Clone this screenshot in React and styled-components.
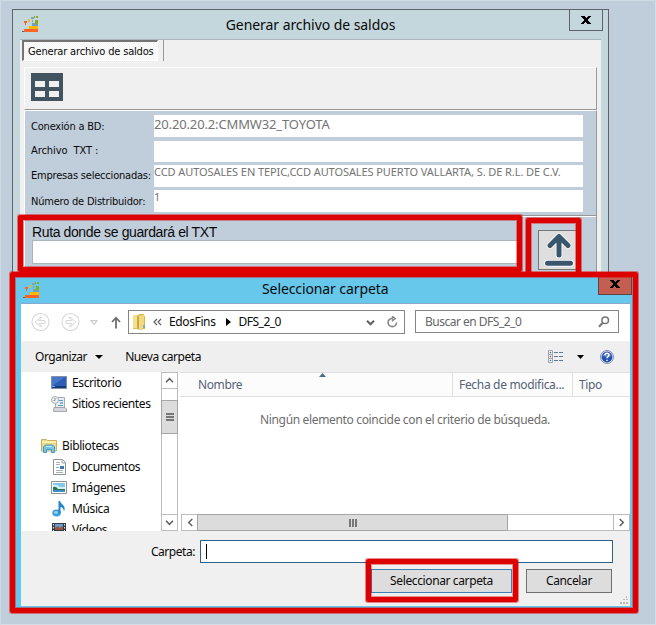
import React from 'react';
import styled, { createGlobalStyle } from 'styled-components';

const Global = createGlobalStyle`
  * { box-sizing: border-box; }
  body { margin: 0; overflow: hidden; }
  svg { display: block; flex: none; }
`;

const ui = '"Noto Sans", "Open Sans", sans-serif';
const tahoma = '"DejaVu Sans Condensed", "DejaVu Sans", sans-serif';

const Desktop = styled.div`
  position: relative;
  width: 656px;
  height: 625px;
  padding: 9px 0 0 12px;
  overflow: hidden;
  background: #c0cddb;
  box-shadow: inset 1px 1px 0 #cfdae4, inset -1px -1px 0 #d2dde7;
`;

const Label = styled.span`
  display: block;
  white-space: pre;
  font-family: ${(p) => p.$font || ui};
  font-size: ${(p) => p.$size || 12}px;
  line-height: 16px;
  letter-spacing: ${(p) => p.$ls ?? -0.38}px;
  color: ${(p) => p.$color || '#0a0a0a'};
`;

/* ---------- Main window ---------- */
const MainWindow = styled.section`
  display: flex;
  flex-direction: column;
  width: 597px;
  height: 520px;
  padding: 0 7px;
  background: #c3d7dc;
  border: 1px solid #5f626c;
`;

const TitleBar = styled.header`
  display: grid;
  grid-template-columns: 60px 1fr 60px;
  height: 29px;
  flex: none;
`;

const TitleIcon = styled.div`
  padding: 5px 0 0 2px;
`;

const WindowTitle = styled.div`
  display: flex;
  justify-content: center;
  padding-top: 7px;
`;

const CloseButton = styled.button`
  justify-self: end;
  width: 34px;
  height: 22px;
  margin: -1px -2px 0 0;
  padding: 0;
  display: flex;
  align-items: center;
  justify-content: center;
  background: #c3d7dc;
  border: 1px solid #5f626c;
`;

const MainClient = styled.div`
  display: flex;
  flex-direction: column;
  flex: 1;
  background: #f0f0f0;
  border-top: 1px solid #aab7bd;
`;

const TabStrip = styled.nav`
  display: flex;
  height: 22px;
  gap: 5px;
  padding-left: 2px;
  margin-bottom: 5px;
`;

const Tab = styled.div`
  width: 136px;
  height: 21px;
  padding: 2px 0 0 4px;
  border: 1px solid #fff;
  border-top: 2px solid #747474;
  border-left: 2px solid #747474;
  background: repeating-conic-gradient(#fff 0 25%, #f3f3f3 0 50%) 0 0 / 2px 2px;
`;

const TabDivider = styled.div`
  width: 1px;
  height: 21px;
  background: #979797;
`;

const Toolbar = styled.div`
  height: 43px;
  margin: 0 4px 0 4px;
  padding: 5px 0 0 6px;
  border: 1px solid #fff;
  border-right-color: #9a9a9a;
  border-bottom-color: #979797;
`;

const FormPanel = styled.div`
  flex: 1;
  margin: 0 4px 0 4px;
  background: #c0cddb;
  border: solid #fff;
  border-width: 1px 0 0 1px;
  border-right: 1px solid #999;
`;

const Fields = styled.div`
  display: grid;
  grid-template-columns: 123px 429px;
  grid-template-rows: 26px 24px 25px 22px;
  height: 105px;
  padding: 4px 0 0 6px;
  border-bottom: 1px solid #979797;
`;

const FieldLabel = styled.label`
  padding-top: ${(p) => p.$top}px;
`;

const FieldValue = styled.div`
  height: ${(p) => p.$height}px;
  background: #fff;

  ${Label} {
    margin-top: ${(p) => p.$top || 0}px;
  }
`;

const RouteSection = styled.div`
  display: flex;
  border-top: 1px solid #fff;
`;

const RouteGroup = styled.div`
  width: 494px;
  padding: 7px 0 0 7px;
`;

const RouteInput = styled.div`
  height: 24px;
  background: #fff;
  border: 1px solid #aeb3b9;
`;

const UploadButton = styled.button`
  display: flex;
  align-items: flex-start;
  width: 40px;
  height: 40px;
  margin: 13px 0 0 19px;
  padding: 2px 0 0 5px;
  border: 1px solid #777;
  background: #dedede;
`;

/* ---------- Dialog ---------- */
const Dialog = styled.section`
  position: absolute;
  left: 14px;
  top: 276px;
  width: 619px;
  height: 332px;
  padding: 0 3px 2px 7px;
  background: #67c8ec;
`;

const DialogTitleBar = styled.header`
  display: grid;
  grid-template-columns: 60px 1fr 34px;
  height: 28px;
  border-bottom: 1px solid #86a9cd;
`;

const DialogTitle = styled.div`
  display: flex;
  padding: 5px 0 0 181px;
`;

const DialogClose = styled.button`
  width: 34px;
  height: 19px;
  margin-left: 2px;
  padding: 0 0 2px;
  display: flex;
  align-items: center;
  justify-content: center;
  background: #c35e50;
  border: 1px solid #5d4548;
  border-top: 0;
`;

const NavRow = styled.div`
  display: flex;
  height: 37px;
  padding: 6px 11px 0 10px;
  background: #fff;
`;

const NavButtons = styled.div`
  display: flex;
  align-items: center;
  width: 97px;
  height: 24px;
`;

const AddressBar = styled.div`
  display: flex;
  align-items: center;
  width: 277px;
  height: 24px;
  padding: 0 6px 0 3px;
  border: 1px solid #858585;
`;

const Crumb = styled.div`
  margin-left: ${(p) => p.$gap}px;
`;

const AddressActions = styled.div`
  display: flex;
  align-items: center;
  gap: 12px;
  margin-left: auto;
`;

const SearchBox = styled.div`
  display: flex;
  align-items: center;
  justify-content: space-between;
  width: 204px;
  height: 23px;
  margin-left: 10px;
  padding: 0 8px 0 9px;
  border: 1px solid #858585;
`;

const CommandBar = styled.div`
  display: flex;
  align-items: center;
  height: 31px;
  padding: 0 16px 0 14px;
  background: #efefef;
`;

const CommandArrow = styled.div`
  margin: 0 22px 0 8px;
`;

const ViewActions = styled.div`
  display: flex;
  align-items: center;
  margin-left: auto;
`;

const ViewArrow = styled.div`
  margin: 0 16px 0 13px;
`;

const Browser = styled.div`
  display: flex;
  height: 159px;
  background: #fff;
`;

const Tree = styled.ul`
  width: 140px;
  margin: 0;
  padding: 0;
  overflow: hidden;
  list-style: none;
`;

const TreeItem = styled.li`
  display: flex;
  align-items: center;
  gap: 5px;
  height: 21px;
  padding-left: ${(p) => (p.$root ? 20 : 30)}px;
  margin-top: ${(p) => (p.$root ? 21 : 0)}px;
`;

const TreeIcon = styled.div`
  display: flex;
  justify-content: center;
  width: 16px;
`;

const VerticalScroll = styled.div`
  width: 17px;
  border: 1px solid #bcbcbc;
  display: flex;
  flex-direction: column;
`;

const ScrollButton = styled.div`
  display: flex;
  align-items: center;
  justify-content: center;
  width: ${(p) => (p.$side ? 16 : 15)}px;
  height: ${(p) => (p.$side ? 15 : 16)}px;
  flex: none;
  border: 0 solid #bcbcbc;
  border-top-width: ${(p) => (!p.$side && p.$end ? 1 : 0)}px;
  border-bottom-width: ${(p) => (!p.$side && !p.$end ? 1 : 0)}px;
  border-left-width: ${(p) => (p.$side && p.$end ? 1 : 0)}px;
`;

const VerticalThumb = styled.div`
  display: flex;
  align-items: center;
  justify-content: center;
  height: 34px;
  margin: 11px -1px auto;
  background: #dcdcdc;
  border: 1px solid #a5a5a5;
`;

const FileList = styled.div`
  display: flex;
  flex-direction: column;
  width: 450px;
  margin-left: auto;
`;

const ListHeader = styled.div`
  display: grid;
  grid-template-columns: 273px 120px 1fr;
  height: 25px;
  background: #fcfcfc;
  border: solid #dfdfdf;
  border-width: 1px 0;
`;

const HeaderCell = styled.div`
  position: relative;
  padding: 4px 0 0 ${(p) => p.$pad}px;
  border-right: ${(p) => (p.$last ? 0 : 1)}px solid #dfdfdf;
`;

const SortMark = styled.div`
  position: absolute;
  left: 139px;
  top: 0;
`;

const EmptyMessage = styled.div`
  display: flex;
  flex: 1;
  padding: 15px 0 0 80px;
`;

const HorizontalScroll = styled.div`
  display: flex;
  height: 17px;
  margin-left: 1px;
  border: 1px solid #bcbcbc;
  justify-content: space-between;
`;

const HorizontalThumb = styled.div`
  display: flex;
  align-items: center;
  justify-content: center;
  width: 311px;
  margin: -1px auto -1px -1px;
  background: #dcdcdc;
  border: 1px solid #a5a5a5;
`;

const Footer = styled.footer`
  height: 75px;
  padding: 9px 17px 0 0;
  background: #f0f0f0;
  position: relative;
`;

const FolderRow = styled.div`
  display: flex;
  align-items: center;
  justify-content: flex-end;
  gap: 5px;
`;

const FolderInput = styled.div`
  width: 413px;
  height: 23px;
  padding: 3px 5px;
  background: #fff;
  border: 1px solid #2c628b;
`;

const Caret = styled.div`
  width: 1px;
  height: 15px;
  background: #000;
`;

const Buttons = styled.div`
  display: flex;
  justify-content: flex-end;
  gap: 14px;
  padding: 6px 1px 0 0;
`;

const DialogButton = styled.button`
  display: flex;
  align-items: center;
  justify-content: center;
  width: ${(p) => p.$width}px;
  height: 24px;
  padding: 0;
  background: #dddddd;
  border: 1px solid ${(p) => (p.$primary ? '#3c7fb1' : '#707070')};
`;

const Grip = styled.div`
  position: absolute;
  right: 2px;
  bottom: 2px;
`;

/* Red frames drawn over the windows */
const Highlight = styled.div`
  position: absolute;
  left: ${(p) => p.$x}px;
  top: ${(p) => p.$y}px;
  width: ${(p) => p.$w}px;
  height: ${(p) => p.$h}px;
  border: 5px solid #dc0000;
  border-radius: 2px;
  box-shadow: 0 0 0 1px rgba(220, 0, 0, 0.45), inset 0 0 0 1px rgba(220, 0, 0, 0.4);
  pointer-events: none;
`;

/* ---------- Drawings ---------- */
const Logo = () => (
  <svg width="18" height="18" viewBox="0 0 18 18" shapeRendering="crispEdges">
    <path d="M0 16h2v-2h14v3H0z" fill="#ff6426" />
    <path d="M0 16h2v1H0z" fill="#686068" />
    <path d="M7 11h9v3H7z" fill="#fdb800" />
    <path d="M10 8h6v3h-6z" fill="#75a0b5" />
    <path d="M13 5h3v4h-3zM12 1h1v2h-1zM14 1h2v2h-2z" fill="#88ac20" />
    <path d="M2 6h3v2H4v2H3V8H2zM7 5h1v1H7z" fill="#f16434" />
    <path d="M6 4h2v3H6z" fill="#edba25" />
    <path d="M9 2h3v2H9zM10 5h1v2h-1z" fill="#7da6ae" />
  </svg>
);

const CloseMark = () => (
  <svg width="10" height="8" viewBox="0 0 10 8" fill="#000" shapeRendering="crispEdges">
    <path d="M0 0h4v1h1v1h1V1h1V0h3v1H9v1H8v1H7v2h1v1h1v1h1v1H6V7H5V6H4v1H3v1H0V7h1V6h1V5h1V3H2V2H1V1H0z" />
  </svg>
);

const TableIcon = () => (
  <svg width="32" height="28" viewBox="0 0 32 28">
    <path d="M0 0h32v28H0z" fill="#41545f" />
    <path d="M4 8h10v6H4zM18 8h10v6H18zM4 18h10v6H4zM18 18h10v6H18z" fill="#f0f0f0" />
  </svg>
);

const UploadIcon = () => (
  <svg width="30" height="34" viewBox="0 0 30 34" fill="none" strokeLinecap="round" strokeLinejoin="round">
    <path d="M15 22V4M6 12.5L15 3.5l9 9M3.5 30.3h23" stroke="#fff" strokeWidth="6.6" />
    <path d="M15 22V4M6 12.5L15 3.5l9 9M3.5 30.3h23" stroke="#39566c" strokeWidth="5" />
  </svg>
);

const CircleArrow = ({ flip }) => (
  <svg width="19" height="20" viewBox="0 0 20 20" fill="none" stroke="#d4d4d4">
    <circle cx="10" cy="10" r="9" strokeWidth="1.1" />
    <path
      transform={flip ? 'translate(20 0) scale(-1 1)' : undefined}
      d="M4.5 10l5-4.7h2L8.2 8.5h6.5v3H8.2l3.3 3.2h-2z"
    />
  </svg>
);

const Down = ({ w = 7, h = 4, color = '#000', hollow }) => (
  <svg width={w} height={h} viewBox="0 0 8 4" preserveAspectRatio="none">
    <path d={hollow ? 'M1 .5h6L4 3.5z' : 'M0 0h8L4 4z'} fill={hollow ? '#fff' : color} stroke={hollow ? '#ccc' : 'none'} />
  </svg>
);

const UpArrow = () => (
  <svg width="10" height="13" viewBox="0 0 10 13" fill="none" stroke="#707070" strokeWidth="1.8">
    <path d="M5 12.5V2M1 6l4-4.3L9 6" />
  </svg>
);

const FolderIcon = () => (
  <svg width="15" height="16" viewBox="0 0 15 16">
    <path d="M1 1h5l1-1h5v13l-2 3-3-1H1z" fill="#e0bd57" />
    <path d="M1 1h4v13H1z" fill="#f4df91" />
    <path d="M5 2l2 1v13l-2-2z" fill="#cda83e" />
    <path d="M7 2l5-1v13l-5 2z" fill="#f1da80" />
    <path d="M12 2h1v13h-3l2-2z" fill="#d5b851" />
    <path d="M12 11v3" stroke="#49a4df" strokeWidth="1.4" />
  </svg>
);

const Chevron = ({ rotate = 0, color = '#606060', width = 2 }) => (
  <svg width="9" height="9" viewBox="0 0 9 9" fill="none" stroke={color} strokeWidth={width}>
    <path transform={`rotate(${rotate} 4.5 4.5)`} d="M1 2.7l3.5 3.6L8 2.7" />
  </svg>
);

const DoubleChevron = () => (
  <svg width="9" height="8" viewBox="0 0 9 8" fill="none" stroke="#555" strokeWidth="1.1">
    <path d="M4 1L1 4l3 3M8 1L5 4l3 3" />
  </svg>
);

const RightTriangle = () => (
  <svg width="5" height="8" viewBox="0 0 5 8"><path d="M0 0l5 4-5 4z" /></svg>
);

const Refresh = () => (
  <svg width="11" height="12" viewBox="0 0 11 12" fill="none" stroke="#888" strokeWidth="1.7">
    <path d="M6 2.3H5.2a4.2 4.2 0 1 0 4.3 4.2M5 .2L8 2.6 5 5" />
  </svg>
);

const SearchIcon = () => (
  <svg width="12" height="12" viewBox="0 0 12 12" fill="none" stroke="#767676">
    <circle cx="7.2" cy="4.3" r="3.3" strokeWidth="1.5" />
    <path d="M4.8 6.7L1 10.8" strokeWidth="2" />
  </svg>
);

const ListIcon = () => (
  <svg width="16" height="13" viewBox="0 0 16 13">
    {['#408070', '#c43d32', '#4779b7'].map((c, i) => (
      <g key={c} transform={`translate(0 ${i * 4})`}>
        <path d="M.5.5h4v4h-4z" fill="#fff" stroke="#9aa5ae" />
        <path d="M2 2h1v1H2z" fill={c} stroke={c} strokeWidth=".6" />
        <path d="M6 2.5h4M11 2.5h4" stroke="#607b91" />
      </g>
    ))}
  </svg>
);

const HelpIcon = () => (
  <svg width="14" height="14" viewBox="0 0 14 14">
    <circle cx="7" cy="7" r="6.5" fill="#dce5f1" stroke="#8390ad" />
    <circle cx="7" cy="7" r="5.4" fill="#2450b4" />
    <path d="M2.2 6a5 4 0 0 1 9.5 0q-4 2-9.5 0" fill="#5a83d2" />
    <path d="M5 5.3c0-2.8 4-2.8 4-.3C9 6.6 7 6.5 7 8.3M7 9.7v1.3" fill="none" stroke="#fff" strokeWidth="1.5" />
  </svg>
);

const DesktopIcon = () => (
  <svg width="16" height="13" viewBox="0 0 16 13">
    <path d="M.5.5h15v12H.5z" fill="#2e5db6" stroke="#7e8fa7" />
    <path d="M1 1h13L1 10z" fill="#5482d2" opacity=".7" />
    <path d="M1 10h14v2H1z" fill="#143b78" /><path d="M1 10.5h3" stroke="#64bee4" />
  </svg>
);

const RecentIcon = () => (
  <svg width="16" height="16" viewBox="0 0 16 16">
    <path d="M4.5 1.5h9v10h-9z" fill="#e7edf2" stroke="#a4acb2" />
    <path d="M3 11.5h11l1.5 1.5v2.5h-13z" fill="#d5d9dd" stroke="#a1a7ab" />
    <path d="M8 4.5h4M7 9.5h5" stroke="#57a0ce" strokeWidth="1.2" />
    <path d="M9 6h3v2H9z" fill="#7db7dc" />
    <circle cx="4" cy="4" r="3.5" fill="#eef0f1" stroke="#a9afb3" />
    <path d="M4 2v2.5H2.5" fill="none" stroke="#8c9397" />
  </svg>
);

const LibraryIcon = () => (
  <svg width="16" height="14" viewBox="0 0 16 14">
    <path d="M.5 2V.5h5l1 1H15.500V12H.5z" fill="#f1d780" stroke="#cbb062" />
    <path d="M1 3h14" stroke="#fff1ac" strokeWidth="2" />
    <path d="M2.500 13.500V8l2-2h7l2 2v5.500h-3v-3h-5v3z" fill="#78c3e4" stroke="#429dc9" />
    <path d="M5 7.500h6" stroke="#c6ebf6" />
  </svg>
);

const DocumentIcon = () => (
  <svg width="13" height="16" viewBox="0 0 13 16">
    <path d="M.5.5h9l3 3v12H.5z" fill="#fff" stroke="#929292" />
    <path d="M9 .5V4h3" fill="#eee" stroke="#a7a7a7" />
    <path d="M3 3.5h4M3 5.5h4M3 11.5h7M3 13.5h7" stroke="#a3b3bf" />
    <path d="M3 8.5h3" stroke="#91a1ad" /><path d="M7 7h4v3H7z" fill="#3d76b2" />
  </svg>
);

const PictureIcon = () => (
  <svg width="16" height="13" viewBox="0 0 16 13">
    <path d="M.5.5h15v12H.5z" fill="#fff" stroke="#929292" />
    <path d="M2 2h12v9H2z" fill="#82c8e9" /><path d="M2 4q4-1 7 2h5v2H2z" fill="#d6edf5" />
    <path d="M2 6q3-1 5 2h7v1H2z" fill="#26755b" /><path d="M2 9h12v2H2z" fill="#3d92bd" />
  </svg>
);

const MusicIcon = () => (
  <svg width="14" height="16" viewBox="0 0 14 16">
    <ellipse cx="4.600" cy="12" rx="4.300" ry="3.400" fill="#3b9ddb" />
    <path d="M6.500 12V0h1.500c1 4 6.500 4 4 10.500-.3-3-2-4.500-3.500-4.500v6z" fill="#2585c8" />
    <ellipse cx="4" cy="11.5" rx="2" ry="1.4" fill="#8ed1f2" />
  </svg>
);

const VideoIcon = () => (
  <svg width="16" height="14" viewBox="0 0 16 14">
    <path d="M1 0h14v14H1z" fill="#343b42" />
    <path d="M4 1h8v6H4z" fill="#679fca" /><path d="M4 5l3-2 2 2 3-2v4H4z" fill="#975443" />
    <path d="M2.5 1v13M13.5 1v13" stroke="#e5e8eb" strokeDasharray="1.5 1.5" />
    <path d="M4 8h8v6H4z" fill="#5d91bd" />
  </svg>
);

const ThumbMarks = ({ vertical }) => (
  <svg width="8" height="8" viewBox="0 0 8 8" shapeRendering="crispEdges">
    <path transform={vertical ? 'rotate(90 4 4)' : undefined} d="M0 0h2v8H0zM3 0h2v8H3zM6 0h2v8H6z" fill="#777" />
  </svg>
);

const GripDots = () => (
  <svg width="8" height="8" viewBox="0 0 8 8" fill="#b9b9b9">
    <path d="M6 0h1v2H6zM3 3h2v1H3zM6 3h2v1H6zM0 6h2v2H0zM3 6h2v2H3zM6 6h2v2H6z" />
  </svg>
);

const fields = [
  { label: 'Conexión a BD:', value: '20.20.20.2:CMMW32_TOYOTA', top: 4, height: 22, valueTop: 1, size: 13, ls: -0.14 },
  { label: 'Archivo  TXT :', value: '', top: 2, height: 21, labelLs: -0.08 },
  { label: 'Empresas seleccionadas:', value: 'CCD AUTOSALES EN TEPIC,CCD AUTOSALES PUERTO VALLARTA, S. DE R.L. DE C.V.', top: 3, height: 22, valueTop: -1, size: 11, ls: -0.08 },
  { label: 'Número de Distribuidor:', value: '1', top: 4, height: 22, valueTop: -1, size: 11 },
];

const tree = [
  { name: 'Escritorio', Icon: DesktopIcon },
  { name: 'Sitios recientes', Icon: RecentIcon },
  { name: 'Bibliotecas', Icon: LibraryIcon, root: true },
  { name: 'Documentos', Icon: DocumentIcon },
  { name: 'Imágenes', Icon: PictureIcon },
  { name: 'Música', Icon: MusicIcon },
  { name: 'Vídeos', Icon: VideoIcon },
];

export default function App() {
  return (
    <Desktop>
      <Global />
      <MainWindow>
        <TitleBar>
          <TitleIcon><Logo /></TitleIcon>
          <WindowTitle><Label $size={14} $ls={-0.06}>Generar archivo de saldos</Label></WindowTitle>
          <CloseButton aria-label="Cerrar"><CloseMark /></CloseButton>
        </TitleBar>
        <MainClient>
          <TabStrip>
            <Tab><Label $font={tahoma} $size={11} $ls={-0.17}>Generar archivo de saldos</Label></Tab>
            <TabDivider />
          </TabStrip>
          <Toolbar><TableIcon /></Toolbar>
          <FormPanel>
            <Fields>
              {fields.map((f) => (
                <React.Fragment key={f.label}>
                  <FieldLabel $top={f.top}>
                    <Label $font={tahoma} $size={11} $ls={f.labelLs ?? -0.2}>{f.label}</Label>
                  </FieldLabel>
                  <FieldValue $height={f.height} $top={f.valueTop}>
                    {f.value && <Label $size={f.size} $ls={f.ls} $color="#747474">{f.value}</Label>}
                  </FieldValue>
                </React.Fragment>
              ))}
            </Fields>
            <RouteSection>
              <RouteGroup>
                <Label $font={'"Liberation Sans", Arial, sans-serif'} $size={14}>Ruta donde se guardará el TXT</Label>
                <RouteInput />
              </RouteGroup>
              <UploadButton aria-label="Subir"><UploadIcon /></UploadButton>
            </RouteSection>
          </FormPanel>
        </MainClient>
      </MainWindow>

      <Highlight $x={18} $y={215} $w={504} $h={57} />
      <Highlight $x={526} $y={218} $w={55} $h={60} />

      <Dialog>
        <DialogTitleBar>
          <TitleIcon><Logo /></TitleIcon>
          <DialogTitle><Label $size={14} $ls={-0.1}>Seleccionar carpeta</Label></DialogTitle>
          <DialogClose aria-label="Cerrar"><CloseMark /></DialogClose>
        </DialogTitleBar>
        <NavRow>
          <NavButtons>
            <CircleArrow />
            <Crumb $gap={11}><CircleArrow flip /></Crumb>
            <Crumb $gap={10}><Down hollow w={8} h={5} /></Crumb>
            <Crumb $gap={13}><UpArrow /></Crumb>
          </NavButtons>
          <AddressBar>
            <FolderIcon />
            <Crumb $gap={6}><DoubleChevron /></Crumb>
            <Crumb $gap={7}><Label>EdosFins</Label></Crumb>
            <Crumb $gap={10}><RightTriangle /></Crumb>
            <Crumb $gap={8}><Label $ls={-0.5}>DFS_2_0</Label></Crumb>
            <AddressActions><Chevron /><Refresh /></AddressActions>
          </AddressBar>
          <SearchBox><Label $color="#666" $ls={-0.5}>Buscar en DFS_2_0</Label><SearchIcon /></SearchBox>
        </NavRow>
        <CommandBar>
          <Label $ls={-0.45}>Organizar</Label>
          <CommandArrow><Down w={8} h={4} /></CommandArrow>
          <Label $ls={-0.45}>Nueva carpeta</Label>
          <ViewActions>
            <ListIcon />
            <ViewArrow><Down w={7} h={4} /></ViewArrow>
            <HelpIcon />
          </ViewActions>
        </CommandBar>
        <Browser>
          <Tree>
            {tree.map(({ name, Icon, root }) => (
              <TreeItem key={name} $root={root}><TreeIcon><Icon /></TreeIcon><Label>{name}</Label></TreeItem>
            ))}
          </Tree>
          <VerticalScroll>
            <ScrollButton><Chevron rotate={180} width={1.5} /></ScrollButton>
            <VerticalThumb><ThumbMarks vertical /></VerticalThumb>
            <ScrollButton $end><Chevron width={1.5} /></ScrollButton>
          </VerticalScroll>
          <FileList>
            <ListHeader>
              <HeaderCell $pad={18}>
                <Label $color="#55627a">Nombre</Label>
                <SortMark>
                  <svg width="7" height="4" viewBox="0 0 7 4"><path d="M0 4l3.5-4L7 4z" fill="#4d6c8c" /></svg>
                </SortMark>
              </HeaderCell>
              <HeaderCell $pad={6}><Label $color="#55627a" $ls={-0.32}>Fecha de modifica...</Label></HeaderCell>
              <HeaderCell $pad={6} $last><Label $color="#55627a">Tipo</Label></HeaderCell>
            </ListHeader>
            <EmptyMessage><Label $color="#6d6d6d" $ls={-0.34}>Ningún elemento coincide con el criterio de búsqueda.</Label></EmptyMessage>
            <HorizontalScroll>
              <ScrollButton $side><Chevron rotate={90} width={1.5} /></ScrollButton>
              <HorizontalThumb><ThumbMarks /></HorizontalThumb>
              <ScrollButton $side $end><Chevron rotate={270} width={1.5} /></ScrollButton>
            </HorizontalScroll>
          </FileList>
        </Browser>
        <Footer>
          <FolderRow>
            <Label $ls={-0.45}>Carpeta:</Label>
            <FolderInput><Caret /></FolderInput>
          </FolderRow>
          <Buttons>
            <DialogButton $width={141} $primary><Label>Seleccionar carpeta</Label></DialogButton>
            <DialogButton $width={86}><Label>Cancelar</Label></DialogButton>
          </Buttons>
          <Grip><GripDots /></Grip>
        </Footer>
      </Dialog>

      <Highlight $x={10} $y={272} $w={628} $h={341} />
      <Highlight $x={366} $y={559} $w={152} $h={43} />
    </Desktop>
  );
}
